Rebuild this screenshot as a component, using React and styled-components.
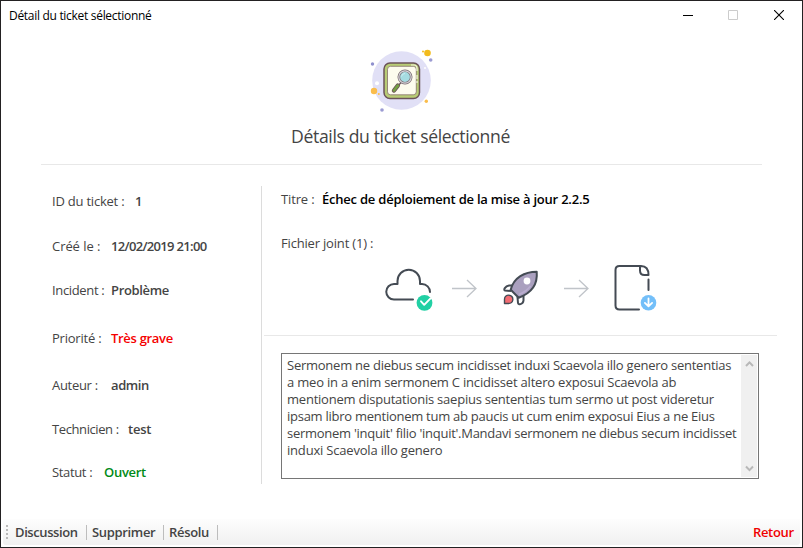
import React from "react";
import styled, { createGlobalStyle } from "styled-components";

const GlobalStyle = createGlobalStyle`
  * { box-sizing: border-box; }
  body { margin: 0; background: #fff; overflow: hidden; }
`;

const Frame = styled.div`
  width: 803px;
  height: 548px;
  display: flex;
  flex-direction: column;
  border: 1px solid #232122;
  background: #fff;
  color: #444;
  font: 13px/18px "Open Sans", "Noto Sans", sans-serif;
`;

const TitleBar = styled.header`
  height: 30px;
  flex: none;
  display: flex;
  justify-content: space-between;
  padding-left: 8px;
  color: #000;
  font-size: 12px;
  line-height: 29px;
`;

const WindowButtons = styled.div`
  display: flex;
`;

const WindowButton = styled.span`
  width: 46px;
  height: 28px;
  display: flex;
  align-items: center;
  justify-content: center;
`;

const Text = styled.span`
  display: inline-block;
  white-space: pre;
  letter-spacing: ${(p) => p.$track || 0}px;
`;

const Hero = styled.section`
  height: 134px;
  flex: none;
  margin: 0 40px;
  display: flex;
  flex-direction: column;
  align-items: center;
  padding-top: 16px;
  border-bottom: 1px solid #e8e8e8;
`;

const HeroIcon = styled.div`
  height: 68px;
  margin-right: 3px;
  svg { display: block; }
`;

const Heading = styled.h1`
  margin: 8px 0 0;
  padding-right: 2px;
  font-size: 17.6px;
  font-weight: 400;
  line-height: 26px;
`;

const Body = styled.main`
  flex: 1;
  display: flex;
  padding: 21px 25px 0 51px;
`;

const Facts = styled.dl`
  width: 210px;
  height: 298px;
  margin: 0;
  display: grid;
  grid-template-rows: 45px 44px 48px 47px 44px 43px 21px;
  padding-top: 6px;
  border-right: 1px solid #dcdcdc;
`;

const Field = styled.div`
  display: flex;
`;

const Label = styled.dt`
  width: ${(p) => p.$width}px;
  flex: none;
`;

const Value = styled.dd`
  margin: 0;
  font-weight: 600;
  color: ${(p) => p.$color || "#444"};
`;

const Detail = styled.section`
  flex: 1;
  margin-left: 2px;
  display: flex;
  flex-direction: column;
`;

const Summary = styled.div`
  height: 150px;
  padding: 4px 0 0 17px;
  border-bottom: 1px solid #e8e8e8;
`;

const FileLabel = styled.div`
  margin-top: 26px;
`;

const Steps = styled.div`
  height: 60px;
  margin: 3px 0 0 101px;
  display: flex;
  align-items: center;
`;

const Step = styled.div`
  width: ${(p) => p.$width}px;
  height: 60px;
  svg { display: block; }
`;

const Message = styled.div`
  width: 478px;
  height: 126px;
  margin: 17px 0 0 17px;
  display: flex;
  border: 1px solid #767676;
  padding: 1px;
`;

const MessageText = styled.div`
  width: 458px;
  flex: none;
  padding: 2px 0 0 4px;
  line-height: 17px;
`;

const MessageLine = styled.div`
  white-space: pre;
  letter-spacing: ${(p) => p.$track || 0}px;
`;

const ScrollTrack = styled.div`
  width: 16px;
  flex: none;
  background: #f0f0f0;
  display: flex;
  flex-direction: column;
  justify-content: space-between;
  align-items: center;
  padding: 5px 0 4px;
  svg { display: block; }
`;

const Toolbar = styled.footer`
  height: 26px;
  flex: none;
  margin: 0 2px 2px;
  display: flex;
  align-items: center;
  border-radius: 0 0 3px 3px;
  background: linear-gradient(#fdfdfd, #f0f0f0);
  font-weight: 600;
`;

const Grip = styled.i`
  width: 2px;
  height: 14px;
  margin: 0 7px 0 3px;
  background: repeating-linear-gradient(#b9b9b9 0 2px, transparent 2px 4px);
`;

const Action = styled.button`
  width: ${(p) => p.$width}px;
  height: 15px;
  padding: 0 0 0 ${(p) => p.$inset}px;
  border: 0;
  border-right: 1px solid #bdbdbd;
  background: none;
  color: inherit;
  font: inherit;
  line-height: 14px;
  text-align: left;
`;

const Back = styled(Action)`
  margin-left: auto;
  border-right: 0;
  color: #f00000;
`;

const TicketIcon = () => (
  <svg width="66" height="68" viewBox="0 0 66 68" fill="none">
    <circle cx="34.5" cy="33.5" r="29.3" fill="#e1e0f6" />
    <circle cx="60.5" cy="6" r="3.3" fill="#f2bb1d" />
    <circle cx="56" cy="4.5" r="1" fill="#f2bb1d" />
    <circle cx="63.7" cy="13" r="1.8" fill="#9b9bd2" />
    <circle cx="5.5" cy="17" r="1.7" fill="#8f90ce" />
    <circle cx="10" cy="36.3" r="2" fill="#fff" />
    <circle cx="58" cy="21" r="1" fill="#fff" />
    <circle cx="7" cy="44" r="3.2" fill="#fabd4c" />
    <circle cx="11.8" cy="47" r="1" fill="#fabd4c" />
    <circle cx="59.3" cy="54.3" r="1.7" fill="#fabd4c" />
    <circle cx="15" cy="63" r="1.8" fill="#9b9bd2" />
    <rect x="17" y="16" width="35.5" height="35.5" rx="6" fill="#b8cc75" stroke="#6b5359" strokeWidth="1.5" />
    <rect x="20.5" y="19.3" width="28.8" height="28.5" rx="3" fill="#fdfcee" stroke="#85706a" strokeWidth="0.8" />
    <path d="M44 18h3q3 0 3 4v2M50 28v4M50 34v2" stroke="#f3f4dc" strokeWidth="1.2" />
    <path d="M34.5 35l-4 4.5" stroke="#6b5359" strokeWidth="1.3" />
    <path d="M30.8 38.7l-3.8 4.8" stroke="#6b5359" strokeWidth="4.4" strokeLinecap="round" />
    <path d="M30.8 38.7l-3.8 4.8" stroke="#75a044" strokeWidth="2.8" strokeLinecap="round" />
    <circle cx="38" cy="30" r="6.2" fill="#a5dce1" stroke="#7a6a70" strokeWidth="2.6" />
    <circle cx="38" cy="30" r="6.2" stroke="#d7d7dc" strokeWidth="1.2" />
    <path d="M34.5 29.5q.5-3 3.5-3" stroke="#cceef0" />
  </svg>
);

const CloudIcon = () => (
  <svg width="54" height="60" viewBox="0 0 54 60" fill="none">
    <path d="M31 44.5H12A7.75 7.75 0 0 1 12 29H15.5V26A11.25 11.25 0 0 1 38 26V29H40A8 8 0 0 1 48 37" stroke="#444b54" strokeWidth="2" strokeLinecap="round" strokeLinejoin="round" />
    <circle cx="42.5" cy="47.8" r="7.9" fill="#21d0a4" />
    <path d="M39 46.3l3.2 3.5 6.3-6.5" stroke="#fff" strokeWidth="1.9" strokeLinecap="round" strokeLinejoin="round" />
  </svg>
);

const ArrowIcon = () => (
  <svg width="26" height="60" viewBox="0 0 26 60" fill="none">
    <path d="M0 33.5h24M15 25l9 8.5-9 8.5" stroke="#c0c4c9" strokeWidth="1.3" />
  </svg>
);

const RocketIcon = () => (
  <svg width="40" height="60" viewBox="0 0 40 60" fill="none">
    <g stroke="#444b54" strokeWidth="2" strokeLinejoin="round">
      <path d="M11.5 30.5H8C4 31 2.2 35.3 4 35.5L10 36M22.5 40.5V45.5C22 49.8 17.2 50 17 48L16.5 42" fill="#fff" />
      <path d="M35.7 16.7c1 11-4 21-18 26l-8-8c3-12 14-18 26-18Z" fill="#aaa0bf" />
      <path d="M3.5 48.5V44c.2-5.5 8.8-5 8.3 1-.3 2.6-2.3 3.5-4.6 3.5Z" fill="#f46c72" strokeWidth="1.4" />
    </g>
    <path d="M18 39.5c5-2 9-5 11.5-8.5" stroke="#baadd0" strokeWidth="1.6" />
    <circle cx="26" cy="26" r="3.4" fill="#fff" />
  </svg>
);

const DocumentIcon = () => (
  <svg width="48" height="60" viewBox="0 0 48 60" fill="none">
    <path d="M35.5 35V24.5M26 54.5H6.5q-4 0-4-4V15q0-4 4-4h21.500q7.500 0 7.500 9h-4q-4.500 0-4.500-4.500V11" stroke="#444b54" strokeWidth="2" strokeLinecap="round" strokeLinejoin="round" />
    <circle cx="35.500" cy="47.700" r="7.800" fill="#73bff9" />
    <path d="M35.5 43.500v7.500M31.900 47.900l3.600 3.500 3.600-3.500" stroke="#fff" strokeWidth="1.800" strokeLinecap="round" strokeLinejoin="round" />
  </svg>
);

const Chevron = ({ down }) => (
  <svg width="9" height="8" viewBox="0 0 9 8" fill="none">
    <path d={down ? "M1 1.5l3.5 3.6L8 1.5" : "M1 6l3.5-3.6L8 6"} stroke="#b8b8b8" strokeWidth="2" />
  </svg>
);

const facts = [
  ["ID du ticket :", "1", 83, -0.22, 0],
  ["Créé le :", "12/02/2019 21:00", 59, -0.06, -0.68],
  ["Incident :", "Problème", 59, -0.35, -0.35],
  ["Priorité :", "Très grave", 59, -0.22, -0.3, "#f50000"],
  ["Auteur :", "admin", 59, -0.3, -0.4],
  ["Technicien :", "test", 76, -0.4, -0.25],
  ["Statut :", "Ouvert", 52, -0.35, -0.3, "#008a17"],
];

const lines = [
  ["Sermonem ne diebus secum incidisset induxi Scaevola illo genero sententias", -0.245],
  ["a meo in a enim sermonem C incidisset altero exposui Scaevola ab", -0.195],
  ["mentionem disputationis saepius sententias tum sermo ut post videretur", -0.225],
  ["ipsam libro mentionem tum ab paucis ut cum enim exposui Eius a ne Eius", -0.26],
  ["sermonem 'inquit' filio 'inquit'.Mandavi sermonem ne diebus secum incidisset", -0.27],
  ["induxi Scaevola illo genero", -0.19],
];

export default function App() {
  return (
    <>
      <GlobalStyle />
      <Frame>
        <TitleBar>
          <Text $track={-0.3}>Détail du ticket sélectionné</Text>
          <WindowButtons>
            <WindowButton>
              <svg width="12" height="10"><path d="M2 5.5h10" stroke="#000" /></svg>
            </WindowButton>
            <WindowButton>
              <svg width="10" height="10"><path d="M.5.5h9v9h-9z" fill="none" stroke="#ccc" /></svg>
            </WindowButton>
            <WindowButton>
              <svg width="10" height="10"><path d="M0 0l10 10M10 0L0 10" stroke="#000" strokeWidth="1.1" /></svg>
            </WindowButton>
          </WindowButtons>
        </TitleBar>
        <Hero>
          <HeroIcon><TicketIcon /></HeroIcon>
          <Heading><Text $track={-0.37}>Détails du ticket sélectionné</Text></Heading>
        </Hero>
        <Body>
          <Facts>
            {facts.map(([label, value, width, labelTrack, valueTrack, color]) => (
              <Field key={label}>
                <Label $width={width}><Text $track={labelTrack}>{label}</Text></Label>
                <Value $color={color}><Text $track={valueTrack}>{value}</Text></Value>
              </Field>
            ))}
          </Facts>
          <Detail>
            <Summary>
              <Field>
                <Label as="span" $width={41}><Text $track={-0.15}>Titre :</Text></Label>
                <Value as="span" $color="#000"><Text $track={-0.22}>Échec de déploiement de la mise à jour 2.2.5</Text></Value>
              </Field>
              <FileLabel><Text $track={-0.18}>Fichier joint (1) :</Text></FileLabel>
              <Steps>
                <Step $width={70}><CloudIcon /></Step>
                <Step $width={49}><ArrowIcon /></Step>
                <Step $width={63}><RocketIcon /></Step>
                <Step $width={49}><ArrowIcon /></Step>
                <Step $width={48}><DocumentIcon /></Step>
              </Steps>
            </Summary>
            <Message>
              <MessageText>
                {lines.map(([line, track]) => <MessageLine key={line} $track={track}>{line}</MessageLine>)}
              </MessageText>
              <ScrollTrack><Chevron /><Chevron down /></ScrollTrack>
            </Message>
          </Detail>
        </Body>
        <Toolbar>
          <Grip />
          <Action $width={72} $inset={0}><Text $track={-0.4}>Discussion</Text></Action>
          <Action $width={77} $inset={5}><Text $track={-0.33}>Supprimer</Text></Action>
          <Action $width={54} $inset={5}><Text $track={-0.33}>Résolu</Text></Action>
          <Back $width={47} $inset={0}><Text $track={-0.35}>Retour</Text></Back>
        </Toolbar>
      </Frame>
    </>
  );
}
